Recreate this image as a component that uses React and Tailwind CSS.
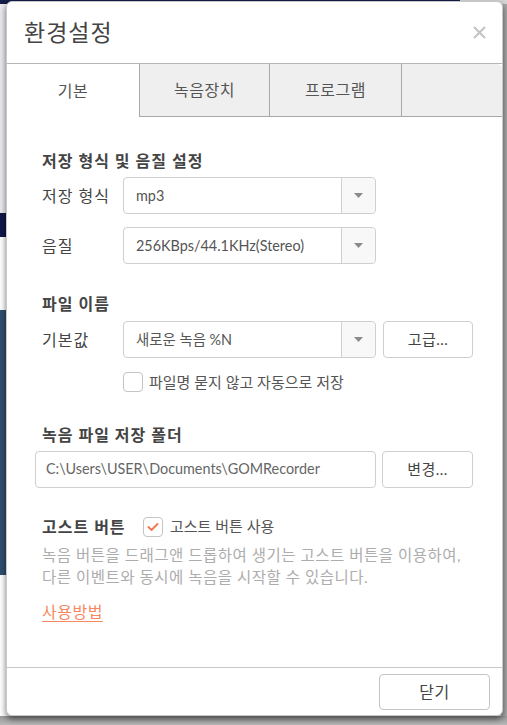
import React from "react";

function Caret() {
  return (
    <svg width="9" height="5" viewBox="0 0 9 5">
      <path d="M0 0 H9 L4.5 5 Z" fill="#8a8a8a" />
    </svg>
  );
}

function Select({ value }) {
  return (
    <div className="flex h-[37px] w-[253px] items-stretch rounded-[4px] border border-[#cfcfcf] bg-white">
      <div className="flex flex-1 items-center pl-[12px] text-[14.4px] text-[#555]">{value}</div>
      <div className="flex w-[34px] items-center justify-center rounded-r-[4px] border-l border-[#cfcfcf] bg-[#f8f8f8]">
        <Caret />
      </div>
    </div>
  );
}

function Btn({ children, w = "w-[90px]" }) {
  return (
    <div className={`flex h-[37px] ${w} items-center justify-center rounded-[4px] border border-[#cfcfcf] bg-white text-[15px] tracking-[0.5px] text-[#444]`}>
      {children}
    </div>
  );
}

export default function App() {
  return (
    <div className="relative h-[725px] w-[507px] overflow-hidden bg-white font-['Lato','Noto_Sans_CJK_KR',sans-serif]">
      {/* background page */}
      <div className="flex h-full w-full flex-col">
        <div className="flex h-[4px] w-full">
          <div className="h-full w-[460px] bg-[#141c4a]" />
          <div className="h-full flex-1 bg-[#d6d6d6]" />
        </div>
        <div className="flex flex-1">
          <div className="flex w-[6px] flex-col">
            <div className="h-[209px] bg-[#e9e9ee]" />
            <div className="h-[24px] bg-[#0f1848]" />
            <div className="h-[73px] bg-white" />
            <div className="h-[265px] bg-[#2f4f6e]" />
            <div className="flex-1 bg-white" />
          </div>
          <div className="flex-1 bg-white" />
          <div className="w-[6px] bg-[#a8a8a8]" />
        </div>
        <div className="h-[9px] w-full bg-gradient-to-b from-[#9a9a9a] to-[#b8b8b8]" />
      </div>

      {/* modal */}
      <div className="absolute left-[6px] top-[1px] flex h-[715px] w-[497px] flex-col rounded-[6px] border border-[#c8c8c8] bg-white shadow-[0_3px_6px_rgba(0,0,0,0.55)]">
        {/* header */}
        <div className="flex h-[61px] items-center justify-between pl-[17px] pr-[16px]">
          <div className="text-[23px] tracking-[1px] text-[#444]">환경설정</div>
          <svg width="13" height="13" viewBox="0 0 13 13">
            <path d="M1 1 L12 12 M12 1 L1 12" stroke="#c4c4c4" strokeWidth="2.2" />
          </svg>
        </div>

        {/* tabs */}
        <div className="flex h-[54px] border-t border-[#b5b5b5]">
          <div className="flex w-[132px] items-center justify-center bg-white text-[16px] tracking-[0.5px] text-[#555]">기본</div>
          <div className="flex w-[130px] items-center justify-center border-b border-l border-[#a8a8a8] bg-[#efefef] text-[16px] tracking-[0.5px] text-[#555]">녹음장치</div>
          <div className="flex w-[132px] items-center justify-center border-b border-l border-[#a8a8a8] bg-[#efefef] text-[16px] tracking-[0.5px] text-[#555]">프로그램</div>
          <div className="flex-1 rounded-tr-[5px] border-b border-l border-[#a8a8a8] bg-[#efefef]" />
        </div>

        {/* content */}
        <div className="flex flex-1 flex-col pl-[35px] pr-[29px] pt-[34px]">
          <div className="h-[20px] text-[16px] font-semibold leading-[20px] tracking-[1px] text-[#444]">저장 형식 및 음질 설정</div>

          <div className="mt-[6px] flex items-center">
            <div className="w-[81px] text-[16px] tracking-[1px] text-[#444]">저장 형식</div>
            <Select value="mp3" />
          </div>
          <div className="mt-[13px] flex items-center">
            <div className="w-[81px] text-[16px] tracking-[1px] text-[#444]">음질</div>
            <Select value="256KBps/44.1KHz(Stereo)" />
          </div>

          <div className="mt-[30px] h-[20px] text-[16px] font-semibold leading-[20px] tracking-[1px] text-[#444]">파일 이름</div>
          <div className="mt-[7px] flex items-center">
            <div className="w-[81px] text-[16px] tracking-[1px] text-[#444]">기본값</div>
            <Select value="새로운 녹음 %N" />
            <div className="ml-[7px]">
              <Btn>고급...</Btn>
            </div>
          </div>
          <div className="mt-[13px] flex items-center pl-[81px]">
            <div className="h-[20px] w-[20px] rounded-[4px] border border-[#c4c4c4] bg-white" />
            <div className="ml-[6px] text-[15px] text-[#555]">파일명 묻지 않고 자동으로 저장</div>
          </div>

          <div className="mt-[31px] h-[20px] text-[16px] font-semibold leading-[20px] tracking-[1px] text-[#444]">녹음 파일 저장 폴더</div>
          <div className="mt-[6px] flex items-center">
            <div className="-ml-[7px] flex h-[37px] w-[341px] items-center rounded-[4px] border border-[#cfcfcf] pl-[10px] text-[14.4px] text-[#666]">
              C:\Users\USER\Documents\GOMRecorder
            </div>
            <div className="ml-[6px]">
              <Btn w="w-[91px]">변경...</Btn>
            </div>
          </div>

          <div className="mt-[27px] flex items-center">
            <div className="w-[101px] text-[16px] font-semibold tracking-[1px] text-[#444]">고스트 버튼</div>
            <div className="flex h-[20px] w-[20px] items-center justify-center rounded-[4px] border border-[#c4c4c4] bg-white">
              <svg width="12" height="10" viewBox="0 0 12 10">
                <path d="M1.5 5 L4.5 8 L10.5 2" stroke="#f07a55" strokeWidth="2" fill="none" strokeLinecap="round" strokeLinejoin="round" />
              </svg>
            </div>
            <div className="ml-[7px] text-[15px] text-[#555]">고스트 버튼 사용</div>
          </div>

          <div className="mt-[5px] text-[15.5px] leading-[22px] tracking-[0.5px] text-[#adadad]">
            녹음 버튼을 드래그앤 드롭하여 생기는 고스트 버튼을 이용하여,
            <br />
            다른 이벤트와 동시에 녹음을 시작할 수 있습니다.
          </div>

          <div className="mt-[14px] text-[16px] leading-[20px] tracking-[0.5px] text-[#f7875f] underline underline-offset-[3px]">사용방법</div>
        </div>

        {/* footer */}
        <div className="flex h-[48px] items-start justify-end border-t border-[#c8c8c8] pr-[12px] pt-[6px]">
          <div className="flex h-[36px] w-[111px] items-center justify-center rounded-[4px] border border-[#c4c4c4] bg-white text-[16px] tracking-[0.5px] text-[#444]">
            닫기
          </div>
        </div>
      </div>
    </div>
  );
}
